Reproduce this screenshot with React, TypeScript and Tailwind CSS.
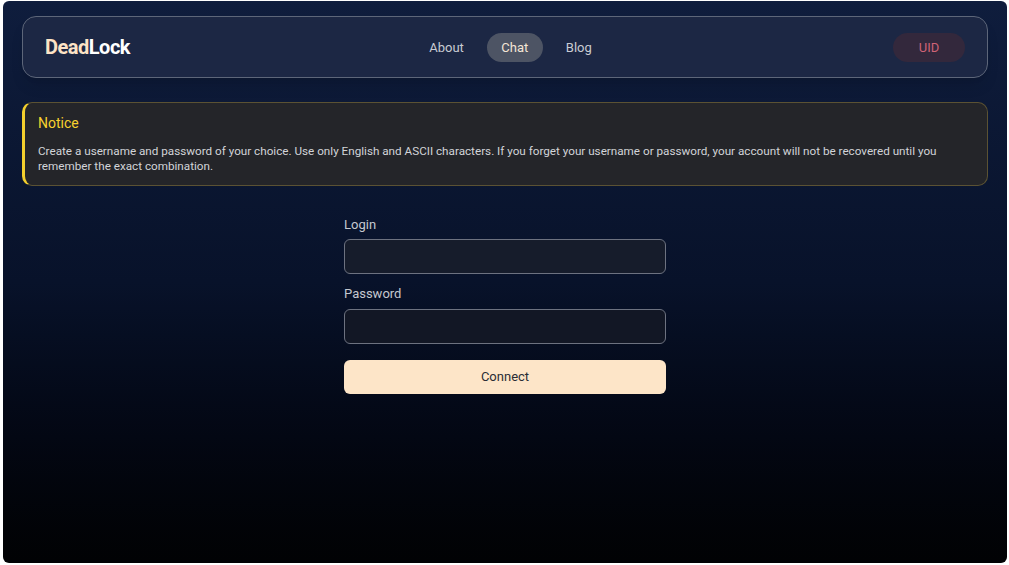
import React, { useState } from 'react';

export default function App() {
  const [login, setLogin] = useState('');
  const [password, setPassword] = useState('');

  return (
    <div className="h-[565px] w-full bg-white pl-[3px] pr-[2px] pt-[1px] pb-[2px] font-['Roboto',sans-serif]">
      <div className="h-full w-full rounded-[6px] bg-gradient-to-b from-[#0f1d3d] via-[#08122a] to-[#010204] px-[19px] pt-[15px] flex flex-col">
        {/* Header */}
        <header className="h-[62px] rounded-[14px] border border-[#5d6679] bg-[#1c2744] flex items-center justify-between pl-[22px] pr-[22px] shadow-lg">
          <h1 className="text-[20px] font-bold tracking-tight">
            <span className="text-[#fde3c6]">Dead</span>
            <span className="text-white">Lock</span>
          </h1>
          <nav className="flex items-center gap-[23px] text-[13px] mr-[2px] mt-[1px]">
            <a className="text-[#c9ccd3]">About</a>
            <a className="text-[#f4e6d6] bg-[#4d5464] rounded-full h-[29px] w-[56px] flex items-center justify-center">Chat</a>
            <a className="text-[#c9ccd3]">Blog</a>
          </nav>
          <button className="h-[29px] w-[72px] rounded-full bg-[#33283c] text-[#cf6376] text-[13px] mt-[1px]">UID</button>
        </header>

        {/* Notice */}
        <div className="mt-[24px] rounded-[10px] border border-[#5b5233] border-l-[3px] border-l-[#f3cf2d] bg-[#242529] pl-[13px] pr-[16px] pt-[11px] pb-[11px]">
          <p className="text-[14px] text-[#f8d12e] leading-[18px]">Notice</p>
          <p className="mt-[12px] text-[11.7px] leading-[15px] text-[#d2d4d8]">
            Create a username and password of your choice. Use only English and ASCII characters. If you forget your username or password, your account will not be recovered until you remember the exact combination.
          </p>
        </div>

        {/* Form */}
        <form className="mt-[31px] mx-auto w-[322px] flex flex-col" onSubmit={(e) => e.preventDefault()}>
          <label className="text-[13px] text-[#c5c8cf] leading-[16px]">Login</label>
          <input
            value={login}
            onChange={(e) => setLogin(e.target.value)}
            className="mt-[6px] h-[35px] rounded-[6px] border border-[#6d7280] bg-[#161c2b] px-3 text-[13px] text-white outline-none"
          />
          <label className="mt-[12px] text-[13px] text-[#c5c8cf] leading-[16px]">Password</label>
          <input
            type="password"
            value={password}
            onChange={(e) => setPassword(e.target.value)}
            className="mt-[7px] h-[35px] rounded-[6px] border border-[#6d7280] bg-[#121725] px-3 text-[13px] text-white outline-none"
          />
          <button className="mt-[16px] h-[34px] rounded-[6px] bg-[#fde5c8] text-[13px] text-[#2a2d35]">Connect</button>
        </form>
      </div>
    </div>
  );
}
